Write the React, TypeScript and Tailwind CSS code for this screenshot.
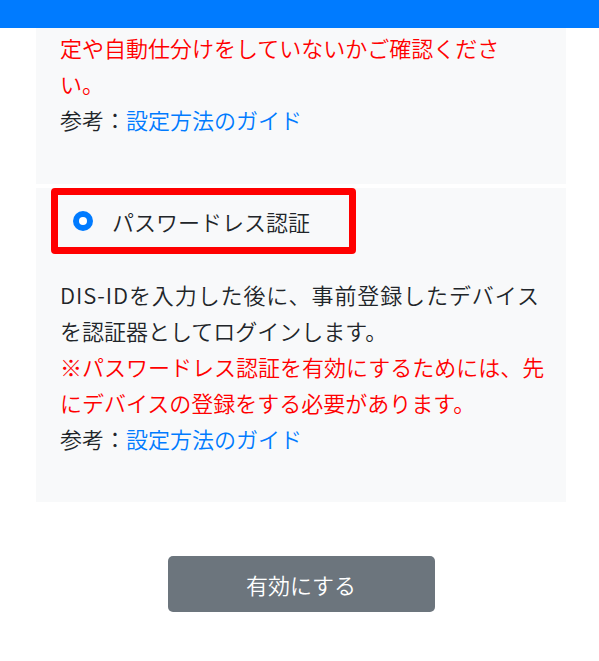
export default function App() {
  return (
    <div
      className="min-h-[661px] w-[599px] bg-white text-[22px] font-[350] leading-[36px] text-[#212529]"
      style={{ fontFamily: '"Noto Sans CJK JP", "Noto Sans", sans-serif' }}
    >
      {/* ヘッダー */}
      <div className="h-[28px] bg-[#007bff]" />

      <div className="mx-[36px] w-[530px]">
        {/* 前の項目（一部） */}
        <div className="bg-[#f8f9fa] pl-[24px] pt-px pb-[47px]">
          <p className="text-[#ff0000]">
            定や自動仕分けをしていないかご確認くださ
            <br />
            い。
          </p>
          <p>
            参考：<a className="text-[#007bff]">設定方法のガイド</a>
          </p>
        </div>

        {/* パスワードレス認証 */}
        <div className="mt-[6px] bg-[#f8f9fa] pb-[46px]">
          <label className="-mt-[2px] ml-[15px] flex h-[66px] w-[305px] items-center rounded-[4px] border-[7px] border-[#ff0000] pl-[15px]">
            <span className="flex size-[20px] items-center justify-center rounded-full bg-[#007bff]">
              <span className="size-[8px] rounded-full bg-white" />
            </span>
            <span className="ml-[19px]">パスワードレス認証</span>
          </label>
          <div className="mt-[22px] pl-[24px]">
            <p>
              <span className="tracking-[0.9px]">DIS-IDを入力した後に、事前登録したデバイス</span>
              <br />
              を認証器としてログインします。
            </p>
            <p className="text-[#ff0000]">
              ※パスワードレス認証を有効にするためには、先
              <br />
              にデバイスの登録をする必要があります。
            </p>
            <p>
              参考：<a className="text-[#007bff]">設定方法のガイド</a>
            </p>
          </div>
        </div>

        <div className="mt-[54px] flex justify-center">
          <button className="flex h-[56px] w-[267px] items-center justify-center rounded-[5px] bg-[#6c757d] text-white">
            有効にする
          </button>
        </div>
      </div>
    </div>
  );
}
